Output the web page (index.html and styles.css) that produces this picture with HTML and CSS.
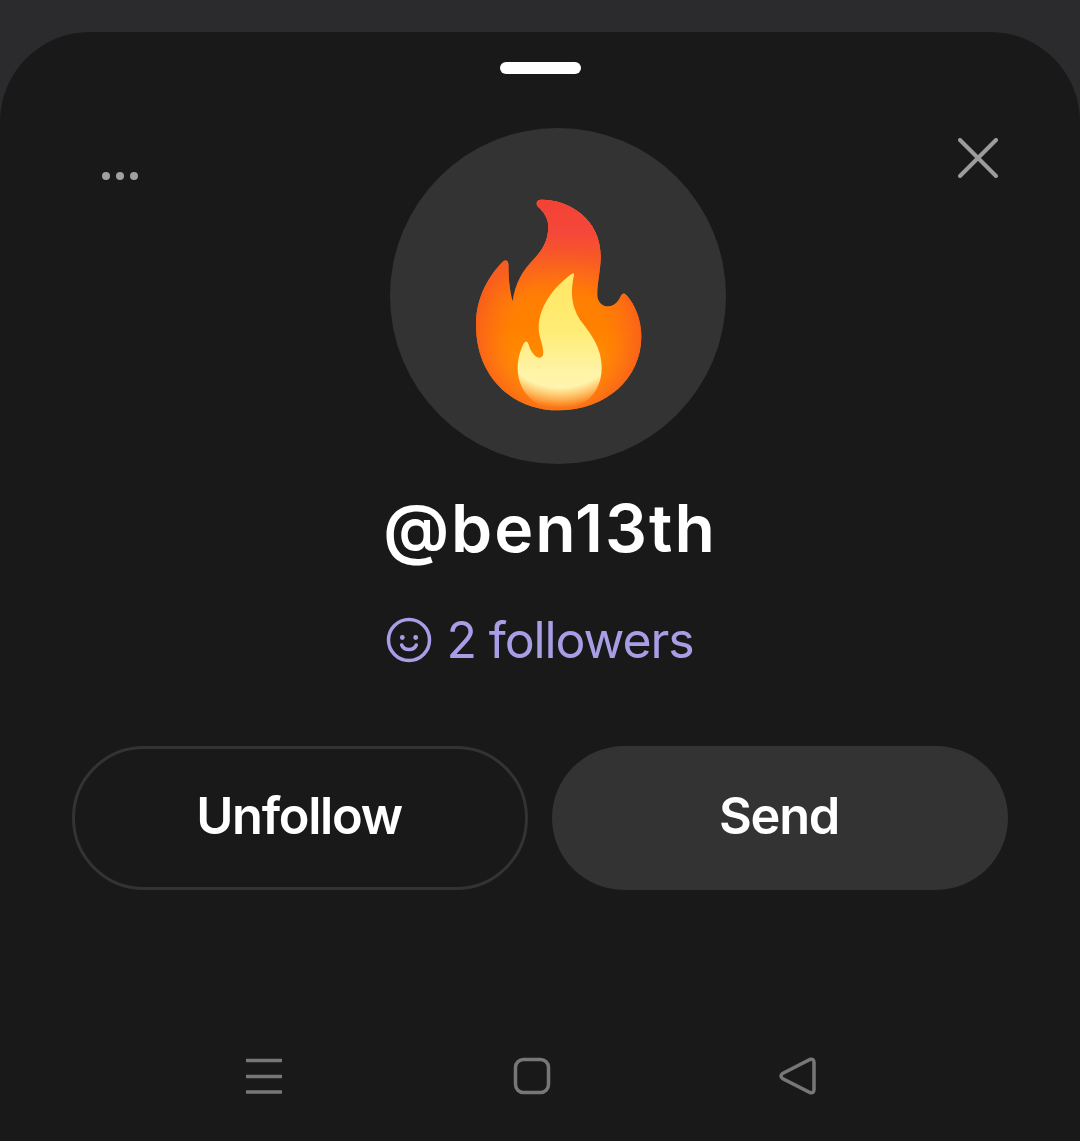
FILE: index.html
```html
<!DOCTYPE html>
<html lang="en">
<head>
<meta charset="utf-8">
<title>@ben13th</title>
<link rel="stylesheet" href="styles.css">
</head>
<body>
<main class="sheet">
  <div class="handle"></div>
  <button class="more" aria-label="More"><span></span><span></span><span></span></button>
  <button class="close" aria-label="Close">
    <svg viewBox="0 0 40 40" width="40" height="40"><path d="M2 2 38 38M38 2 2 38" class="close-path"/></svg>
  </button>
  <div class="avatar">
    <svg class="flame" viewBox="30 25 1008 1008" width="336" height="336">
      <defs>
        <path id="outer" d="M470 252Q470 240 485 240C570 240 662 300 662 410C662 450 652 490 652 525C652 548 668 560 685 560C705 560 718 540 724 526Q731 516 741 528C765 555 784 600 784 650C784 775 680 872 536 872C395 872 288 770 288 615C288 530 330 465 370 425Q382 418 385 432C385 470 388 510 398 545C405 490 430 450 460 420C490 390 505 360 505 320C505 295 490 275 475 262Q470 257 470 252Z"/>
        <linearGradient id="outerG" gradientUnits="userSpaceOnUse" x1="536" y1="240" x2="536" y2="872">
          <stop offset="0" stop-color="#ff7a10"/>
          <stop offset=".6" stop-color="#ff8000"/>
          <stop offset="1" stop-color="#ff9d00"/>
        </linearGradient>
        <radialGradient id="edgeG" gradientUnits="userSpaceOnUse" cx="536" cy="640" r="255">
          <stop offset=".55" stop-color="#ff6a1a" stop-opacity="0"/>
          <stop offset="1" stop-color="#f8581f" stop-opacity=".85"/>
        </radialGradient>
        <linearGradient id="topG" gradientUnits="userSpaceOnUse" x1="536" y1="260" x2="536" y2="540">
          <stop offset="0" stop-color="#f44336"/>
          <stop offset=".3" stop-color="#f5483a"/>
          <stop offset="1" stop-color="#fb6a14" stop-opacity="0"/>
        </linearGradient>
        <linearGradient id="innerG" gradientUnits="userSpaceOnUse" x1="540" y1="462" x2="540" y2="870">
          <stop offset="0" stop-color="#ffe766"/>
          <stop offset=".4" stop-color="#ffec73"/>
          <stop offset=".72" stop-color="#fff3a6"/>
          <stop offset="1" stop-color="#fff6bd"/>
        </linearGradient>
        <radialGradient id="fadeG" gradientUnits="userSpaceOnUse" cx="540" cy="590" r="280">
          <stop offset=".76" stop-color="#fff"/>
          <stop offset=".98" stop-color="#000"/>
        </radialGradient>
        <mask id="fadeM" maskUnits="userSpaceOnUse" x="380" y="440" width="320" height="450">
          <rect x="380" y="440" width="320" height="450" fill="url(#fadeG)"/>
        </mask>
      </defs>
      <use href="#outer" fill="url(#outerG)"/>
      <use href="#outer" fill="url(#edgeG)"/>
      <use href="#outer" fill="url(#topG)"/>
      <path fill="url(#innerG)" mask="url(#fadeM)" d="M582 466C570 520 575 560 600 600C630 640 665 680 665 745C665 820 610 870 540 870C470 870 413 820 413 745C413 715 422 690 432 670Q440 660 445 672C450 690 462 712 478 714Q490 714 490 698C488 670 476 650 476 625C476 555 530 495 575 463Q582 458 582 466Z"/>
    </svg>
  </div>
  <h1 class="name">@ben13th</h1>
  <p class="followers">
    <svg class="smile" viewBox="0 0 46 46" width="46" height="46">
      <circle cx="23" cy="23" r="20.5" class="smile-line"/>
      <circle cx="16.3" cy="20.5" r="2.4" class="smile-eye"/>
      <circle cx="29.7" cy="20.5" r="2.4" class="smile-eye"/>
      <path d="M15.7 28C18 34 28 34 30.3 28" class="smile-line"/>
    </svg>
    <span>2 followers</span>
  </p>
  <div class="actions">
    <button class="btn btn-outline">Unfollow</button>
    <button class="btn btn-fill">Send</button>
  </div>
  <nav class="navbar">
    <svg viewBox="0 0 36 36" width="36" height="36"><path d="M0 2.5H36M0 18.5H36M0 34H36" class="nav-line"/></svg>
    <svg viewBox="0 0 36 36" width="36" height="36"><rect x="1.5" y="1.5" width="33" height="33" rx="8" class="nav-line"/></svg>
    <svg viewBox="0 0 36 36" width="36" height="36"><path d="M2.5 15.5 30 1.5Q34 0.5 34 4.5V31.5Q34 35.5 30 34.5L2.5 20.5Q-.5 18 2.5 15.5Z" class="nav-line"/></svg>
  </nav>
</main>
</body>
</html>
```
FILE: styles.css
```css
* { box-sizing: border-box; }
html, body { margin: 0; height: 100%; }
body {
  background: #2b2b2d;
  padding-top: 32px;
  font-family: Inter, "Liberation Sans", sans-serif;
  color: #fff;
  overflow: hidden;
}
.sheet {
  position: relative;
  height: 1109px;
  background: #191919;
  border-radius: 90px 90px 0 0;
  padding: 30px 72px 0;
  display: flex;
  flex-direction: column;
  align-items: center;
}
.handle {
  width: 81px;
  height: 12px;
  border-radius: 6px;
  background: #fff;
  margin-left: 1px;
}
button { font-family: inherit; border: 0; background: none; padding: 0; color: inherit; }
.more {
  position: absolute;
  left: 102px;
  top: 140px;
  display: flex;
  gap: 6px;
}
.more span { width: 8px; height: 8px; border-radius: 50%; background: #a0a0a0; }
.close { position: absolute; left: 958px; top: 106px; width: 40px; height: 40px; }
.close svg { display: block; }
.close-path { fill: none; stroke: #9c9c9c; stroke-width: 4; stroke-linecap: round; }
.avatar {
  width: 336px;
  height: 336px;
  border-radius: 50%;
  background: #333;
  margin: 54px 0 0 36px;
}
.flame { display: block; }
.name {
  margin: 25px 0 0 20px;
  font-size: 66px;
  line-height: 78px;
  font-weight: 600;
  letter-spacing: 2px;
}
.followers {
  margin: 44px 0 0;
  display: flex;
  align-items: center;
  gap: 14px;
  color: #a89ee6;
  font-size: 50px;
  line-height: 58px;
  letter-spacing: -1.1px;
}
.smile { display: block; }
.smile-line { fill: none; stroke: #a89ee6; stroke-width: 3.5; stroke-linecap: round; }
.smile-eye { fill: #a89ee6; }
.actions {
  width: 100%;
  display: grid;
  grid-template-columns: 1fr 1fr;
  gap: 24px;
  margin-top: 77px;
}
.btn {
  height: 144px;
  border-radius: 72px;
  padding: 0 2px 6px 0;
  font-size: 50.5px;
  font-weight: 600;
  letter-spacing: -1.3px;
  color: #fff;
}
.btn-outline { border: 3px solid #333; }
.btn-fill { background: #333; }
.navbar {
  position: absolute;
  left: 246px;
  top: 1026px;
  display: flex;
  gap: 232px;
}
.navbar svg { display: block; overflow: visible; }
.navbar svg:last-child { margin-left: -2px; }
.nav-line { fill: none; stroke: #777; stroke-width: 3.5; }
```
